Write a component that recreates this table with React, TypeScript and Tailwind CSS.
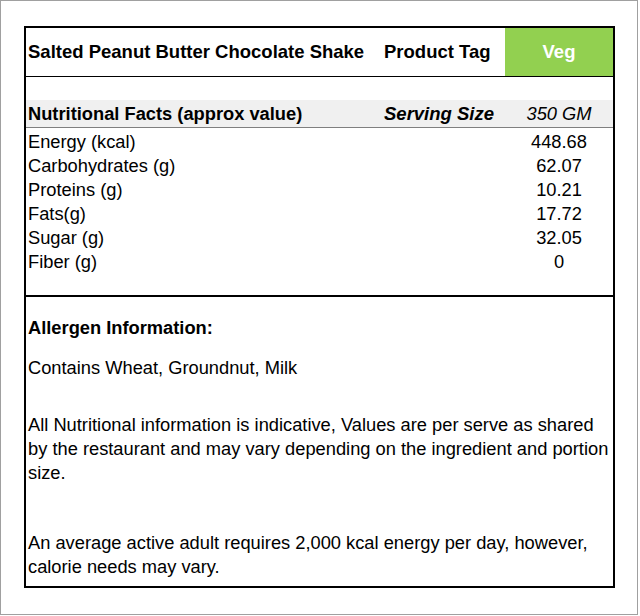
const rows: [string, string][] = [
  ["Energy (kcal)", "448.68"],
  ["Carbohydrates (g)", "62.07"],
  ["Proteins (g)", "10.21"],
  ["Fats(g)", "17.72"],
  ["Sugar (g)", "32.05"],
  ["Fiber (g)", "0"],
];

export default function App() {
  return (
    <div className="w-[640px] h-[616px] bg-white font-['Liberation_Sans',Arial,sans-serif] text-[18.3px] text-black">
      <div className="w-[638px] h-[615px] border border-[#a0a0a0] pl-[23px] pt-[25px]">
        <div className="w-[591px] border-2 border-black">
          {/* title row */}
          <div className="grid grid-cols-[354px_125px_1fr] h-[49px] border-b border-black items-stretch text-[18.5px]">
            <div className="flex items-center pl-[2px] font-bold whitespace-nowrap">Salted Peanut Butter Chocolate Shake</div>
            <div className="flex items-center pl-[4px] font-bold whitespace-nowrap">Product Tag</div>
            <div className="flex items-center justify-center bg-[#92d050] text-white font-bold">Veg</div>
          </div>
          <div className="h-[23px]" />
          {/* facts header */}
          <div className="grid grid-cols-[354px_125px_1fr] h-[28px] bg-[#f0f0f0] border-b border-[#7f7f7f] items-center">
            <div className="pl-[2px] font-bold whitespace-nowrap">Nutritional Facts (approx value)</div>
            <div className="pl-[4px] font-bold italic whitespace-nowrap text-[18.5px]">Serving Size</div>
            <div className="text-center italic">350 GM</div>
          </div>
          <div className="pb-[23px] border-b-2 border-black">
            {rows.map(([label, value]) => (
              <div key={label} className="grid grid-cols-[479px_1fr] h-[24px] items-center">
                <div className="pl-[2px]">{label}</div>
                <div className="text-center">{value}</div>
              </div>
            ))}
          </div>
          {/* allergen section */}
          <div className="pl-[2px] pt-[19px] pb-[7px] leading-[24px]">
            <div className="font-bold">Allergen Information:</div>
            <div className="mt-[16px]">Contains Wheat, Groundnut, Milk</div>
            <div className="mt-[33px]">
              All Nutritional information is indicative, Values are per serve as shared by the restaurant and may vary depending on the ingredient and portion size.
            </div>
            <div className="mt-[46px]">
              An average active adult requires 2,000 kcal energy per day, however, calorie needs may vary.
            </div>
          </div>
        </div>
      </div>
    </div>
  );
}
